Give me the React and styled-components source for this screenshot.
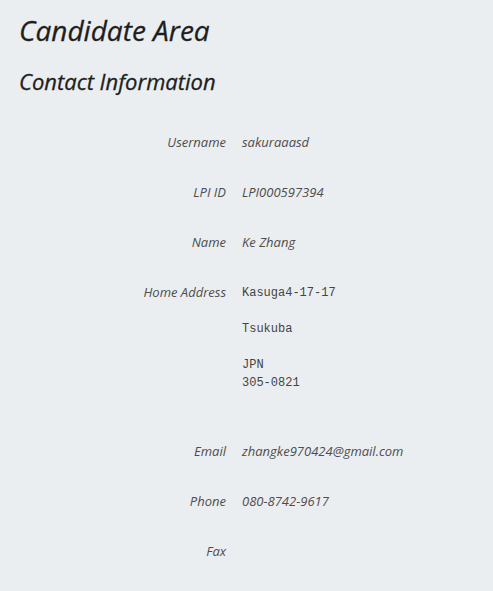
import React from 'react';
import styled, {createGlobalStyle} from "styled-components";

const GlobalStyle = createGlobalStyle`
  html, body {
    margin: 0;
    padding: 0;
    background: #ebeef0;
  }
`;

const Page = styled.div`
  min-height: 591px;
  padding: 10px 19px 0;
  box-sizing: border-box;
  background: #ebeef0;
  font-family: "Open Sans", "Noto Sans", sans-serif;
  font-style: italic;
`;

const Title = styled.h1`
  margin: 0;
  font-size: 28px;
  line-height: 40px;
  font-weight: 500;
  color: #1e1e1e;
  -webkit-text-stroke: 0.3px #1e1e1e;
`;

const SubTitle = styled.h2`
  margin: 15px 0 20px;
  font-size: 22px;
  line-height: 32px;
  font-weight: 500;
  color: #1e1e1e;
  -webkit-text-stroke: 0.3px #1e1e1e;
`;

const Row = styled.div`
  display: grid;
  grid-template-columns: 207px 1fr;
  column-gap: 16px;
  padding: 15px 0;
`;

const Label = styled.div`
  text-align: right;
  font-size: 13px;
  line-height: 20px;
  color: #4d4d4d;
`;

const Value = styled.div`
  font-size: 13px;
  line-height: 20px;
  color: #4d4d4d;
`;

const Address = styled.div`
  font-family: "Liberation Mono", monospace;
  font-style: normal;
  font-size: 12px;
  line-height: 18px;
  color: #444;
  padding-top: 2px;
  padding-bottom: 19px;
  white-space: pre;
`;

const rows = [
    ["Username", "sakuraaasd"],
    ["LPI ID", "LPI000597394"],
    ["Name", "Ke Zhang"],
];

const rows2 = [
    ["Email", "zhangke970424@gmail.com"],
    ["Phone", "080-8742-9617"],
    ["Fax", ""],
];

const App = () => {
    return (
        <Page>
            <GlobalStyle/>
            <Title>Candidate Area</Title>
            <SubTitle>Contact Information</SubTitle>
            {rows.map(([k, v]) => (
                <Row key={k}>
                    <Label>{k}</Label>
                    <Value>{v}</Value>
                </Row>
            ))}
            <Row>
                <Label>Home Address</Label>
                <Address>{"Kasuga4-17-17\n\nTsukuba\n\nJPN\n305-0821\n"}</Address>
            </Row>
            {rows2.map(([k, v]) => (
                <Row key={k}>
                    <Label>{k}</Label>
                    <Value>{v}</Value>
                </Row>
            ))}
        </Page>
    );
};

export default App;
